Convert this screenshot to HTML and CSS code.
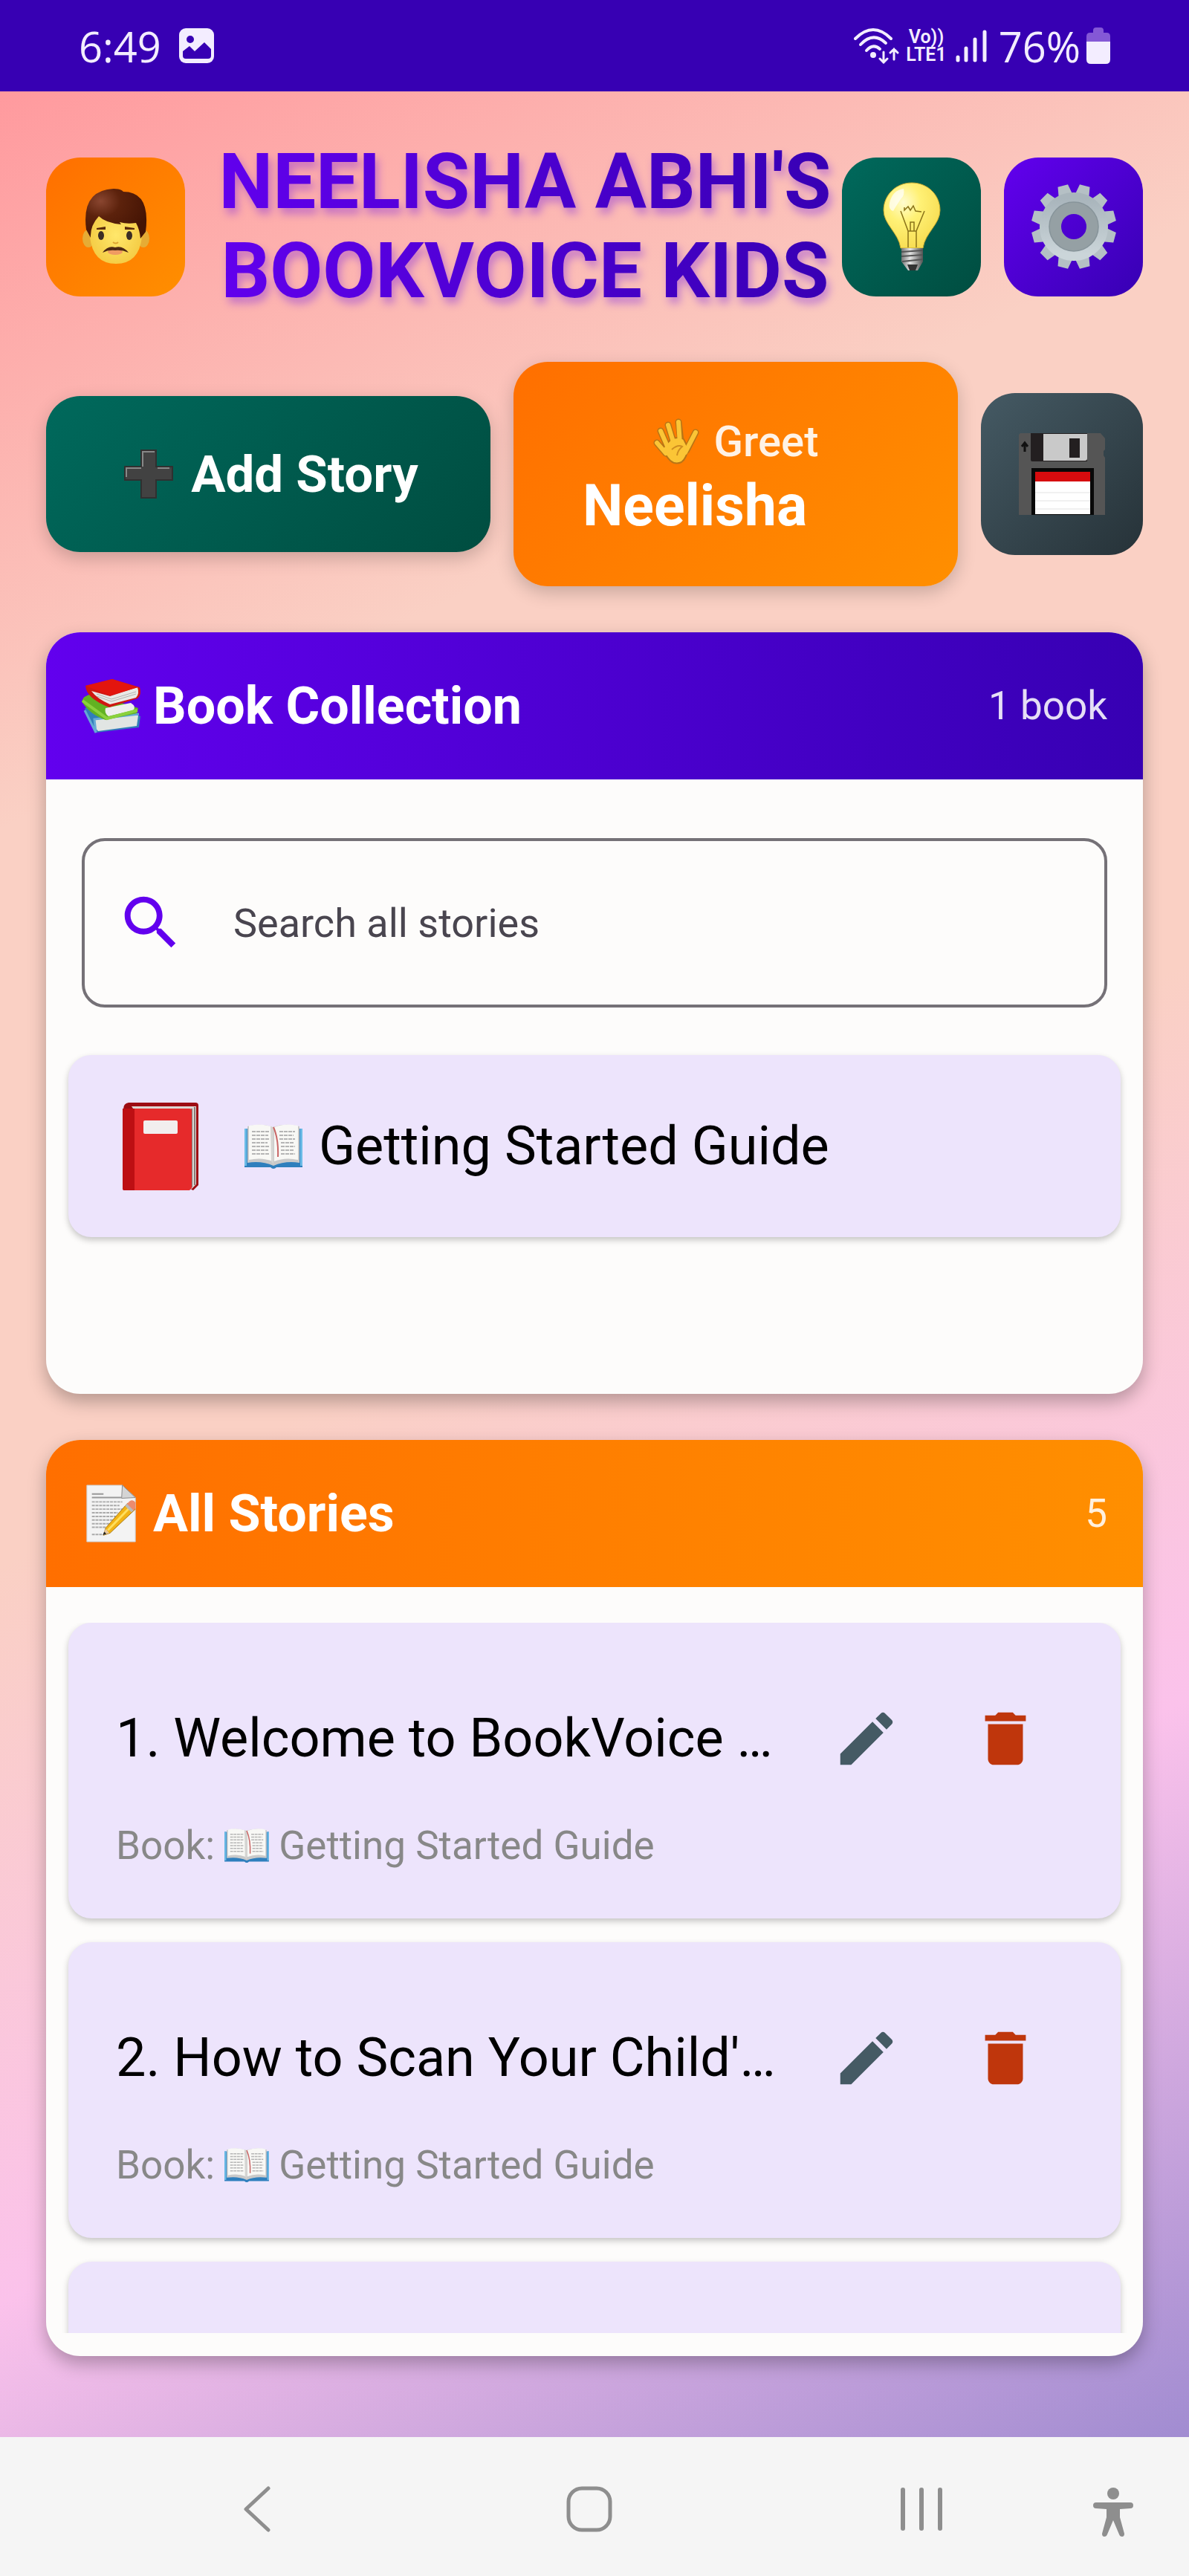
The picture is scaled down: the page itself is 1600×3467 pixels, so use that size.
FILE: index.html
```html
<!DOCTYPE html>
<html lang="en">

<head>
    <meta charset="UTF-8">
    <meta name="viewport" content="width=device-width, initial-scale=1.0">
    <title>BookVoice Kids</title>
    <link rel="stylesheet" href="styles.css">
</head>

<body>
    <!-- shared icons -->
    <svg class="sprite" aria-hidden="true">
        <symbol id="open-book" viewBox="0 0 80 60">
            <path d="M1 6h78v52H44q-4 4-8 0H1z" fill="#2f7fbd" />
            <path d="M1 6h3v50H1zM76 6h3v50h-3z" fill="#6cbbe6" />
            <path d="M5 3Q23-2 39 4Q56-2 75 3v49Q56 49 40 56Q24 49 5 52z" fill="#c9c9c9" />
            <path d="M7 2Q24-2 39 4v46Q24 44 7 48z" fill="#f8f8f5" />
            <path d="M41 4Q56-2 73 2v46Q56 44 41 50z" fill="#f8f8f5" />
            <path d="M36 3q3 0 4 3v48l-3-4z" fill="#d5d5d2" />
            <path d="M11 10h24M11 15h22M11 20h24M11 25h21M11 30h24M11 35h22M11 40h23M48 10h21M48 15h19M48 20h21M50 25h18M50 30h19M50 35h17M50 40h19" stroke="#b5b5b5" stroke-width="2" stroke-dasharray="5 1" fill="none" />
            <path d="M40 4q7 16 6 40" stroke="#c96666" stroke-width="2" fill="none" />
        </symbol>
        <symbol id="edit" viewBox="0 0 24 24">
            <path d="M3 17.25V21h3.75L17.81 9.94l-3.75-3.75L3 17.25zM20.71 7.04c.39-.39.39-1.02 0-1.41l-2.34-2.34c-.39-.39-1.02-.39-1.41 0l-1.83 1.83 3.75 3.75 1.83-1.83z" />
        </symbol>
        <symbol id="delete" viewBox="0 0 24 24">
            <path d="M6 19c0 1.1.9 2 2 2h8c1.1 0 2-.9 2-2V7H6v12zM19 4h-3.5l-1-1h-5l-1 1H5v2h14V4z" />
        </symbol>
    </svg>

    <div class="status-bar">
        <div class="status-group">
            <span>6:49</span>
            <svg class="status-photo" viewBox="0 0 47 47">
                <rect width="47" height="47" rx="9" fill="#f3edff" />
                <circle cx="15" cy="15" r="5" fill="#3700b3" />
                <path d="M5 31l9-7 7 7L34 19l9 9v9q0 4-4 4H9q-4 0-4-4z" fill="#3700b3" />
            </svg>
        </div>
        <div class="status-group status-right">
            <svg class="status-wifi" viewBox="0 0 62 48">
                <g fill="none" stroke="#f3edff" stroke-width="4" stroke-linecap="round">
                    <path d="M2 14Q26-10 50 14" />
                    <path d="M9 22Q26 4 43 20" />
                    <path d="M17 30Q26 20 35 28" />
                    <path d="M40 32v14M35 41l5 5 5-5M54 42V28M49 33l5-5 5 5" stroke-width="3" />
                </g>
                <circle cx="26" cy="36" r="4" fill="#f3edff" />
            </svg>
            <span class="volte">Vo))<br>LTE1</span>
            <svg class="status-signal" viewBox="0 0 42 44">
                <path d="M3 37v4M14 25v16M26 13v28M39 3v38" stroke="#f3edff" stroke-width="5" stroke-linecap="round" />
            </svg>
            <span>76%</span>
            <svg class="status-battery" viewBox="0 0 32 49">
                <path d="M9 4q0-4 4-4h6q4 0 4 4v3h4q5 0 5 5v7H0v-7q0-5 5-5h4z" fill="#8458d6" />
                <path d="M0 19h32v24q0 6-6 6H6q-6 0-6-6z" fill="#f3edff" />
            </svg>
        </div>
    </div>

    <main class="app">
        <header class="header">
            <button class="icon-btn orange" aria-label="Profile">
                <svg class="icon-face" viewBox="0 0 90 102">
                    <defs>
                        <radialGradient id="skin" cx=".5" cy=".5" r=".6">
                            <stop offset="0" stop-color="#ffe76b" />
                            <stop offset="1" stop-color="#f3c83f" />
                        </radialGradient>
                        <radialGradient id="hair" cx=".25" cy=".25" r=".8">
                            <stop offset="0" stop-color="#8a4630" />
                            <stop offset=".4" stop-color="#5c220c" />
                            <stop offset="1" stop-color="#451404" />
                        </radialGradient>
                    </defs>
                    <ellipse cx="8" cy="67" rx="8" ry="12" fill="#e6ac35" />
                    <ellipse cx="82" cy="67" rx="8" ry="12" fill="#e6ac35" />
                    <path d="M10 45Q10 24 45 24T80 45V65Q76 101 45 101T10 65z" fill="url(#skin)" />
                    <path d="M5 55Q-2 2 42 0q10 0 13 4Q92 4 85 58l-7 9q-1-12-6-21-12 2-22-1l2 3q-21-2-30-11Q10 50 11 66z" fill="url(#hair)" />
                    <path d="M19 53l12-2v4H19zM57 51l13 2v2H57z" fill="#5c2c0c" />
                    <ellipse cx="25" cy="63" rx="4" ry="6" fill="#3b2d25" />
                    <ellipse cx="63" cy="63" rx="4" ry="6" fill="#3b2d25" />
                    <path d="M41 72q4 3 7 0" stroke="#dda331" stroke-width="2" fill="none" />
                    <ellipse cx="44" cy="85" rx="10" ry="4" fill="#f09a62" />
                    <path d="M27 86q7-10 17-7 10-3 18 7-9-4-18-3-9-1-17 3z" fill="#4d2813" />
                </svg>
            </button>
            <h1 class="title">NEELISHA ABHI'S BOOKVOICE KIDS</h1>
            <div class="header-actions">
                <button class="icon-btn green" aria-label="Tips">
                    <svg class="icon-bulb" viewBox="0 0 78 120">
                        <defs>
                            <radialGradient id="glass" cx=".35" cy=".3" r=".75">
                                <stop offset="0" stop-color="#fffccf" />
                                <stop offset=".4" stop-color="#fff176" />
                                <stop offset="1" stop-color="#f7dc50" />
                            </radialGradient>
                            <linearGradient id="base">
                                <stop offset="0" stop-color="#777" />
                                <stop offset=".4" stop-color="#e3e3e3" />
                                <stop offset="1" stop-color="#555" />
                            </linearGradient>
                        </defs>
                        <path d="M39 1C17 1 1 18 1 38c0 19 20 30 23 51h30C57 68 77 57 77 38 77 18 61 1 39 1z" fill="url(#glass)" stroke="#c5a72d" />
                        <path d="M9 28Q13 11 28 9q2 9-4 14-6 9-10 16-7-2-5-11z" fill="#fff" opacity=".7" />
                        <path d="M24 39l10 27v22M56 39L45 66v22M34 66h11M37 66V54h5v12M29 34v4l5-5 3 5 4-6 3 7 8 1" fill="none" stroke="#8a7319" stroke-width="1.5" />
                        <path d="M25 89h29v18l-7 12H34l-9-12z" fill="url(#base)" />
                        <path d="M25 94l29-2M25 100l29-2M26 107l28-3" stroke="#555" stroke-width="2" />
                        <path d="M33 111h14l-3 8h-8z" fill="#333" />
                    </svg>
                </button>
                <button class="icon-btn purple" aria-label="Settings">
                    <svg class="icon-gear" viewBox="-57 -57 114 114">
                        <defs>
                            <linearGradient id="steel" x2="0" y2="1">
                                <stop offset="0" stop-color="#a9b5bc" />
                                <stop offset="1" stop-color="#cbd5d9" />
                            </linearGradient>
                            <g id="teeth">
                                <path d="M-10-40L-7-57H7L10-40zM-10 40L-7 57H7L10 40z" />
                            </g>
                        </defs>
                        <g fill="#b5c0c5">
                            <use href="#teeth" transform="rotate(15)" />
                            <use href="#teeth" transform="rotate(45)" />
                            <use href="#teeth" transform="rotate(75)" />
                            <use href="#teeth" transform="rotate(105)" />
                            <use href="#teeth" transform="rotate(135)" />
                            <use href="#teeth" transform="rotate(165)" />
                        </g>
                        <circle r="37" fill="none" stroke="url(#steel)" stroke-width="18" />
                        <circle r="25" fill="none" stroke="#95a0a4" stroke-width="16" />
                        <circle r="33" fill="none" stroke="#87949a" stroke-width="1.5" />
                    </svg>
                </button>
            </div>
        </header>

        <div class="actions">
            <button class="action-btn add-btn green">
                <svg class="icon-plus" viewBox="0 0 66 66">
                    <path d="M23 1h20v22h22v18H43v24H23V41H1V23h22z" fill="#424242" stroke="#303030" stroke-width="2" />
                    <path d="M25 23V3h16M3 37V25h20M45 25h16" stroke="#888" stroke-width="2" fill="none" />
                </svg>
                Add Story
            </button>
            <button class="action-btn greet-btn orange">
                <span class="greet-line">
                    <svg class="icon-wave" viewBox="0 0 62 62">
                        <g stroke="#b87516" stroke-width="9" stroke-linecap="round" fill="none">
                            <path d="M17 47L5 33M19 38L10 17M27 32L20 9M37 31L34 5M45 43l12-24" />
                        </g>
                        <path d="M12 41L24 28q10-4 17 0l6 12q-2 14-9 19-8 4-15-2-6-6-11-16z" fill="#fbc536" stroke="#b87516" stroke-width="2" />
                        <g stroke="#fbc536" stroke-width="6" stroke-linecap="round" fill="none">
                            <path d="M17 47L5 33M20 40L10 17M28 35L20 9M36 35L34 5M43 46l14-27" />
                        </g>
                        <path d="M25 42q8-7 14-4-6 5-7 12" stroke="#cf8e20" stroke-width="2" fill="none" />
                    </svg>
                    Greet
                </span>
                <span class="greet-name">Neelisha</span>
            </button>
            <button class="save-btn" aria-label="Save">
                <svg class="icon-floppy" viewBox="0 0 116 110">
                    <path d="M2 0h108l6 7v15l-2 2v6l2 3v77H0V2z" fill="#555" />
                    <path d="M16 0h76v38H18q-2 0-2-2z" fill="#231f20" />
                    <path d="M33 1h59v33q0 3-3 3H33z" fill="#c9c9c9" />
                    <path d="M68 7h14v26H68z" fill="#231f20" />
                    <path d="M8 25V14M4 18l4-5 4 5" stroke="#111" stroke-width="3" fill="none" />
                    <path d="M17 47h84v63H17z" fill="#080808" />
                    <path d="M22 52h74v57H22z" fill="#fff" />
                    <path d="M22 52h74v13H22z" fill="#d60b0e" />
                    <path d="M22 80h74M22 91h74M22 102h74" stroke="#e2e2e2" stroke-width="1" />
                </svg>
            </button>
        </div>

        <section class="card">
            <div class="card-header purple">
                <h2 class="card-title">
                    <svg class="card-icon" viewBox="0 0 80 72">
                        <path d="M4 39l17-3 48 10 10 4-2 15-58 7Q7 54 4 39z" fill="#317db9" />
                        <path d="M18 55l52-8 6 2-2 14-52 7q-8-8-4-15z" fill="#e1e5e3" />
                        <path d="M4 42l15 30-2-18 60-7" fill="none" stroke="#65a9d5" stroke-width="3" />
                        <path d="M0 30Q2 22 14 20l62 19-2 7-42 9Q10 47 0 30z" fill="#62b222" />
                        <path d="M32 39l34-7q8 5 3 10l-33 8q-6-4-4-11z" fill="#eee" />
                        <path d="M1 29l33 24 41-11" fill="none" stroke="#8bd13c" stroke-width="4" />
                        <path d="M5 9L41 0l37 11q3 10-3 15L37 38Q6 26 5 9z" fill="#cf1712" />
                        <path d="M13 16l25 7 37-12q3 9-2 14l-35 9Q20 26 13 16z" fill="#e9e9e6" />
                        <path d="M5 9L41 0l35 11-38 11z" fill="#e3150e" />
                        <path d="M20 23l20 7 33-10M20 20l20 7 33-10" fill="none" stroke="#b3b3b0" />
                    </svg>
                    Book Collection
                </h2>
                <span class="card-count">1 book</span>
            </div>
            <div class="card-body">
                <div class="search">
                    <label for="search" aria-label="Search">
                        <svg class="material" viewBox="0 0 24 24" fill="#6200ee">
                            <path d="M15.5 14h-.79l-.28-.27C15.41 12.59 16 11.11 16 9.5 16 5.91 13.09 3 9.5 3S3 5.91 3 9.5 5.91 16 9.5 16c1.61 0 3.09-.59 4.23-1.57l.27.28v.79l5 4.99L20.49 19l-4.99-5zm-6 0C7.01 14 5 11.99 5 9.5S7.01 5 9.5 5 14 7.01 14 9.5 11.99 14 9.5 14z" />
                        </svg>
                    </label>
                    <input type="text" id="search" placeholder="Search all stories">
                </div>
                <ul class="list book-list">
                    <li class="item book">
                        <svg class="icon-red-book" viewBox="0 0 102 118">
                            <path d="M1 9Q1 1 8 0h90q4 0 4 4v107l-7 7-10-4z" fill="#9d0c12" />
                            <path d="M12 5h87v105l-7 7-8-8z" fill="#ddd6d2" />
                            <path d="M93 8v106M97 6v105" stroke="#8a7b78" stroke-width="2" />
                            <path d="M0 8h90q3 0 3 3v104l-3 3H2q-2 0-2-3z" fill="#e62a2b" />
                            <path d="M0 8h16v110H2q-2 0-2-3z" fill="#bd0f13" />
                            <rect x="28" y="24" width="46" height="18" rx="2" fill="#f2eeee" />
                        </svg>
                        <svg class="icon-open-book"><use href="#open-book" /></svg>
                        <span class="book-name">Getting Started Guide</span>
                    </li>
                </ul>
            </div>
        </section>

        <section class="card stories">
            <div class="card-header orange-flat">
                <h2 class="card-title">
                    <svg class="card-icon" viewBox="-6 -2 80 82">
                        <path d="M0 0h49l18 17v61H0z" fill="#f3f3f3" stroke="#ccc" />
                        <path d="M49 0l18 17-19 1z" fill="#d4d4d4" stroke="#888" />
                        <path d="M7 12h16M7 17h41" stroke="#999" stroke-width="2" />
                        <path d="M7 23h42M7 28h38M7 33h44M7 38h36M7 43h34M7 48h30M7 53h26M7 58h20M7 68h14" stroke="#aaa" stroke-width="2" stroke-dasharray="4 1" />
                        <path d="M56 25l11 8-35 33-9 3 3-10z" fill="#f2b416" stroke="#a87610" />
                        <path d="M61 29L29 62" stroke="#ffdf5e" stroke-width="3" />
                        <path d="M54 27l5-5q5-3 8 2v8l-4 4z" fill="#ec8b6e" />
                        <path d="M54 27l9 9" stroke="#bbb" stroke-width="4" />
                        <path d="M26 60l5 6-9 3z" fill="#e8c79a" />
                        <path d="M22 69l2-5 3 3z" fill="#222" />
                    </svg>
                    All Stories
                </h2>
                <span class="card-count">5</span>
            </div>
            <div class="card-body">
                <ul class="list story-list">
                    <li class="item story">
                        <div class="story-row">
                            <span class="story-name">1. Welcome to BookVoice …</span>
                            <button class="row-btn edit" aria-label="Edit"><svg class="material"><use href="#edit" /></svg></button>
                            <button class="row-btn delete" aria-label="Delete"><svg class="material"><use href="#delete" /></svg></button>
                        </div>
                        <p class="story-book">Book: <svg class="icon-small-book"><use href="#open-book" /></svg> Getting Started Guide</p>
                    </li>
                    <li class="item story">
                        <div class="story-row">
                            <span class="story-name">2. How to Scan Your Child'…</span>
                            <button class="row-btn edit" aria-label="Edit"><svg class="material"><use href="#edit" /></svg></button>
                            <button class="row-btn delete" aria-label="Delete"><svg class="material"><use href="#delete" /></svg></button>
                        </div>
                        <p class="story-book">Book: <svg class="icon-small-book"><use href="#open-book" /></svg> Getting Started Guide</p>
                    </li>
                    <li class="item story"></li>
                </ul>
            </div>
        </section>
    </main>

    <nav class="nav-bar">
        <button aria-label="Back">
            <svg width="62" height="62" viewBox="0 0 62 62">
                <path d="M46 3L16 31l30 28" fill="none" stroke="#8e8e8e" stroke-width="5" stroke-linecap="round" stroke-linejoin="round" />
            </svg>
        </button>
        <button aria-label="Home">
            <svg width="62" height="62" viewBox="0 0 62 62">
                <rect x="3" y="3" width="56" height="56" rx="18" fill="none" stroke="#8e8e8e" stroke-width="5" />
            </svg>
        </button>
        <button aria-label="Recent apps">
            <svg width="62" height="62" viewBox="0 0 62 62">
                <path d="M6 5v52M31 5v52M56 5v52" stroke="#8e8e8e" stroke-width="6" stroke-linecap="round" />
            </svg>
        </button>
        <button class="nav-a11y" aria-label="Accessibility">
            <svg width="54" height="66" viewBox="0 0 54 66">
                <circle cx="27" cy="8" r="8" fill="#8e8e8e" />
                <path d="M4 20h46q4 0 4 4t-4 4l-14 1v11l6 22q0 4-3 4t-4-3l-8-19-8 19q-1 3-4 3t-3-4l6-22V29L4 28q-4 0-4-4t4-4z" fill="#8e8e8e" />
            </svg>
        </button>
    </nav>
</body>

</html>
```

FILE: styles.css
```css
* {
    box-sizing: border-box;
}

body {
    margin: 0;
    height: 100vh;
    display: flex;
    flex-direction: column;
    font-family: Roboto, "Liberation Sans", sans-serif;
    background-color: #f5f5f5;
}

button {
    border: none;
    padding: 0;
    font-family: inherit;
    cursor: pointer;
}

svg {
    flex-shrink: 0;
}

.sprite {
    position: absolute;
    width: 0;
    height: 0;
}

.purple {
    background: linear-gradient(to right, #6200ee, #3700b3);
}

.green {
    background: linear-gradient(135deg, #00695c, #004d40);
}

.orange {
    background: linear-gradient(135deg, #ff6f00, #ff8f00);
}

.orange-flat {
    background: linear-gradient(to right, #ff6f00, #ff8f00);
}

/* status bar */
.status-bar {
    display: flex;
    justify-content: space-between;
    align-items: center;
    height: 123px;
    padding: 0 106px;
    background-color: #3700b3;
    color: #f3edff;
    font-family: "Open Sans", "Noto Sans", sans-serif;
    font-size: 56px;
    flex-shrink: 0;
}

.status-group {
    display: flex;
    align-items: center;
    gap: 24px;
}

.status-right {
    gap: 8px;
}

.status-photo {
    width: 47px;
    height: 47px;
}

.status-wifi {
    width: 62px;
    height: 48px;
}

.volte {
    font-family: Roboto, sans-serif;
    font-size: 25px;
    line-height: 24px;
    font-weight: 600;
    text-align: center;
}

.status-signal {
    width: 42px;
    height: 44px;
    margin: 0 8px 0 4px;
}

.status-battery {
    width: 32px;
    height: 49px;
}

/* app */
.app {
    flex: 1;
    min-height: 0;
    display: flex;
    flex-direction: column;
    gap: 62px;
    padding: 62px 62px 109px;
    background: linear-gradient(153deg, #ff9a9e, #fad0c4 25%, #fad0c4 50%, #fbc2eb 75%, #a18cd1);
}

.header {
    display: flex;
    align-items: center;
}

.header-actions {
    display: flex;
    gap: 31px;
}

.icon-btn {
    display: flex;
    align-items: center;
    justify-content: center;
    width: 187px;
    height: 187px;
    border-radius: 46px;
    flex-shrink: 0;
}

.icon-btn.purple {
    background: linear-gradient(135deg, #6200ee, #3700b3);
}

.title {
    flex: 1;
    margin: 0 0 0 31px;
    text-align: center;
    font-size: 103px;
    line-height: 120px;
    font-weight: 700;
    color: transparent;
    background: linear-gradient(to right, #6200ee, #3700b3);
    -webkit-background-clip: text;
    background-clip: text;
    filter: drop-shadow(4px 8px 6px rgba(98, 0, 238, 0.35));
}

.icon-face {
    width: 90px;
    height: 102px;
}

.icon-bulb {
    width: 78px;
    height: 120px;
}

.icon-gear {
    width: 114px;
    height: 114px;
}

.actions {
    display: grid;
    grid-template-columns: 1fr 1fr auto;
    align-items: center;
    gap: 31px;
}

.action-btn {
    display: flex;
    align-items: center;
    justify-content: center;
    border-radius: 46px;
    color: white;
    box-shadow: 0 8px 24px rgba(0, 0, 0, 0.2);
}

.add-btn {
    gap: 24px;
    height: 210px;
    padding-left: 8px;
    font-size: 69px;
    font-weight: 700;
}

.icon-plus {
    width: 66px;
    height: 66px;
}

.greet-btn {
    flex-direction: column;
    height: 302px;
    padding: 0 93px;
}

.greet-line {
    display: flex;
    align-items: center;
    gap: 20px;
    font-size: 58px;
    line-height: 86px;
    font-weight: 500;
    color: rgba(255, 255, 255, 0.9);
}

.icon-wave {
    width: 62px;
    height: 62px;
}

.greet-name {
    align-self: flex-start;
    font-size: 77px;
    line-height: 88px;
    font-weight: 700;
}

.save-btn {
    display: flex;
    align-items: center;
    justify-content: center;
    width: 218px;
    height: 218px;
    border-radius: 46px;
    background: linear-gradient(135deg, #455a64, #263238);
}

.icon-floppy {
    width: 116px;
    height: 110px;
}

/* cards */
.card {
    display: flex;
    flex-direction: column;
    flex-shrink: 0;
    border-radius: 46px;
    background-color: #fdfcfb;
    box-shadow: 0 10px 24px rgba(0, 0, 0, 0.28);
    overflow: hidden;
}

.stories {
    flex: 1;
    min-height: 0;
}

.card-header {
    display: flex;
    justify-content: space-between;
    align-items: center;
    height: 198px;
    padding: 0 48px;
    color: white;
    flex-shrink: 0;
}

.card-title {
    display: flex;
    align-items: center;
    gap: 16px;
    margin: 0;
    font-size: 70px;
    font-weight: 700;
}

.card-icon {
    width: 80px;
    height: 80px;
}

.card-count {
    font-size: 53px;
    color: rgba(255, 255, 255, 0.87);
}

.card-body {
    display: flex;
    flex-direction: column;
    flex: 1;
    min-height: 0;
    padding: 48px 30px 31px;
}

.search {
    display: flex;
    align-items: center;
    gap: 64px;
    height: 228px;
    margin: 31px 18px 64px;
    padding: 0 42px;
    border: 4px solid #757177;
    border-radius: 31px;
}

.search label {
    display: flex;
}

.search input {
    flex: 1;
    min-width: 0;
    padding: 0;
    border: none;
    outline: none;
    background: none;
    font-family: inherit;
    font-size: 54px;
}

.search input::placeholder {
    color: #49454f;
    opacity: 1;
}

.material {
    width: 94px;
    height: 94px;
}

.list {
    list-style: none;
    margin: 0;
    padding: 0;
}

.book-list {
    min-height: 425px;
}

.story-list {
    display: flex;
    flex-direction: column;
    gap: 32px;
    flex: 1;
    min-height: 0;
    /* room for the item shadows at both sides */
    margin: 0 -10px;
    padding: 0 10px;
    overflow: hidden;
}

.item {
    flex-shrink: 0;
    border-radius: 31px;
    background-color: #ede4fc;
    box-shadow: 0 4px 8px rgba(0, 0, 0, 0.22);
}

.book {
    display: flex;
    align-items: center;
    height: 245px;
    padding: 0 73px;
}

.icon-red-book {
    width: 102px;
    height: 118px;
}

.icon-open-book {
    width: 82px;
    height: 60px;
    margin: 0 20px 0 60px;
}

.book-name,
.story-name {
    font-size: 72px;
    white-space: nowrap;
}

.story {
    min-height: 398px;
    padding: 62px 62px 62px 64px;
}

.story-row {
    display: flex;
    align-items: center;
}

.story-name {
    flex: 1;
    min-width: 0;
}

.row-btn {
    display: flex;
    align-items: center;
    justify-content: center;
    width: 187px;
    height: 187px;
    background: none;
}

.edit {
    fill: #455a64;
}

.delete {
    fill: #bf360c;
}

.story-book {
    display: flex;
    align-items: center;
    gap: 12px;
    margin: 16px 0 0;
    font-size: 53px;
    line-height: 70px;
    color: #888888;
}

.icon-small-book {
    width: 62px;
    height: 46px;
}

/* navigation bar */
.nav-bar {
    display: flex;
    height: 187px;
    padding: 6px 68px 0 122px;
    background-color: #f5f5f5;
    flex-shrink: 0;
}

.nav-bar button {
    flex: 1;
    display: flex;
    align-items: center;
    justify-content: center;
    background: none;
}

.nav-bar .nav-a11y {
    flex: 0 0 68px;
    padding-top: 8px;
}
```
